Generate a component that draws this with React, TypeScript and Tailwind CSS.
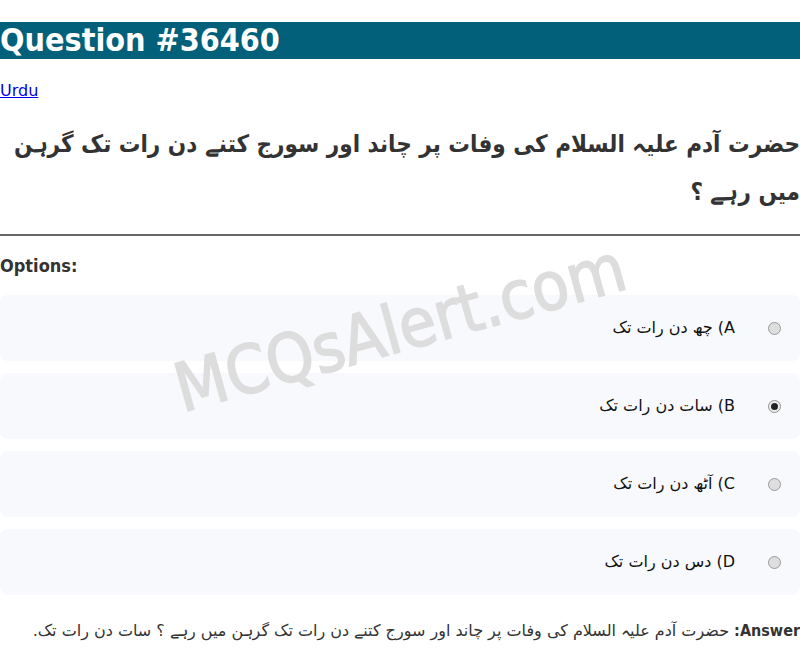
import React from "react";

const options = [
  { key: "A", text: "A) چھ دن رات تک", checked: false },
  { key: "B", text: "B) سات دن رات تک", checked: true },
  { key: "C", text: "C) آٹھ دن رات تک", checked: false },
  { key: "D", text: "D) دس دن رات تک", checked: false },
];

const boldFont = "font-['DejaVu_Sans_Condensed','DejaVu_Sans',sans-serif] font-bold";

export default function App() {
  return (
    <div className="relative flow-root min-h-[657px] bg-white text-[16px] text-[#333] font-['DejaVu_Sans',sans-serif] overflow-hidden">
      <h1 className={`mt-[22px] mb-[22px] bg-[#02607a] text-white text-[32px] leading-[37px] ${boldFont}`}>
        Question #36460
      </h1>
      <a href="#" className="text-[#0000ee] underline leading-[19px] block w-fit mt-[1px]">
        Urdu
      </a>
      <h2
        dir="rtl"
        className={`mt-[20px] mb-[18px] text-[24px] leading-[48px] text-[#333] text-right ${boldFont}`}
      >
        حضرت آدم علیہ السلام کی وفات پر چاند اور سورج کتنے دن رات تک گرہن میں رہے ؟
      </h2>
      <hr className="border-0 border-t-2 border-[#666]" />
      <div className={`mt-[19px] text-[18px] leading-[21px] text-[#333] ${boldFont}`}>Options:</div>
      <div className="mt-[19px] flex flex-col gap-[12px]">
        {options.map((o) => (
          <div
            key={o.key}
            dir="rtl"
            className="flex items-center h-[66px] rounded-[8px] bg-[#f8f9fc] pr-[19px]"
          >
            {o.checked ? (
              <span className="ml-[33px] flex h-[13px] w-[13px] shrink-0 items-center justify-center rounded-full border border-[#8f8f8f] bg-[#efefef]">
                <span className="h-[7px] w-[7px] rounded-full bg-[#222]" />
              </span>
            ) : (
              <span className="ml-[33px] h-[13px] w-[13px] shrink-0 rounded-full border border-[#9a9a9a] bg-[#dedede]" />
            )}
            <span className="text-[#111]">{o.text}</span>
          </div>
        ))}
      </div>
      <p dir="rtl" className="mt-[26px] text-right leading-[19px] text-[#333]">
        <strong className={boldFont}>Answer:</strong> حضرت آدم علیہ السلام کی وفات پر چاند اور سورج کتنے دن رات تک گرہن میں رہے ؟ سات دن رات تک.
      </p>
      <div className="pointer-events-none absolute inset-0 flex items-center justify-center">
        <span className="rotate-[-15.5deg] text-[67px] font-normal font-['DejaVu_Sans_Condensed','DejaVu_Sans',sans-serif] text-[#dddddd] [-webkit-text-stroke:1.6px_#dddddd] whitespace-nowrap">
          MCQsAlert.com
        </span>
      </div>
    </div>
  );
}
